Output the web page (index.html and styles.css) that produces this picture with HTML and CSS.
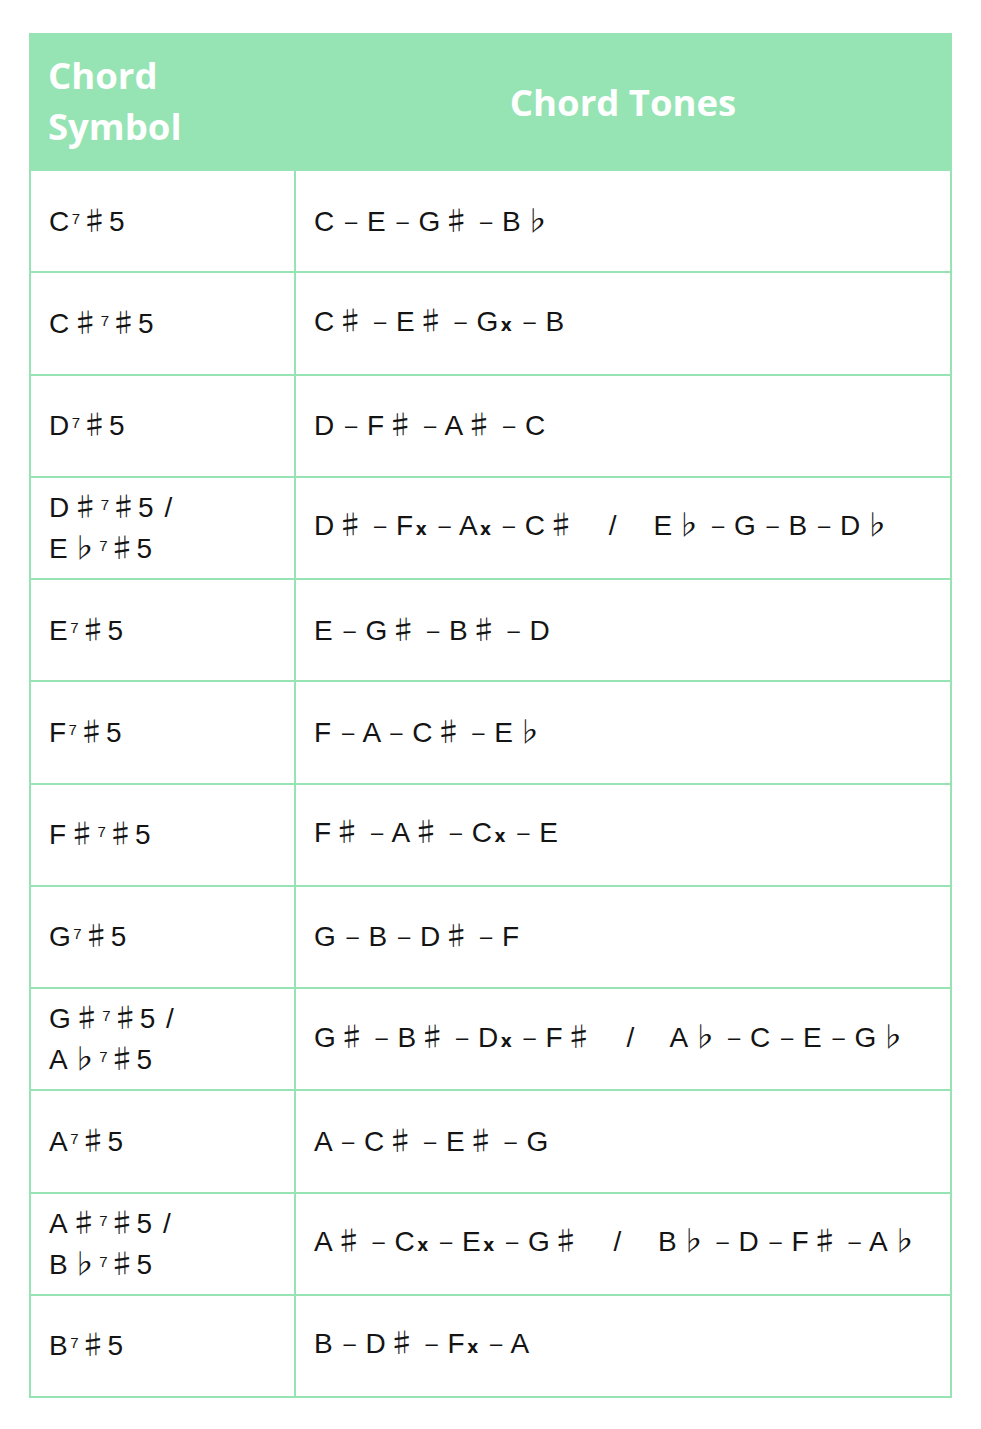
FILE: index.html
```html
<!DOCTYPE html>
<html>
<head>
<meta charset="utf-8">
<link rel="stylesheet" href="styles.css">
</head>
<body>
<div class="wrap">
<table class="chords">
  <thead>
    <tr><th class="c1">Chord<br>Symbol</th><th class="c2">Chord Tones</th></tr>
  </thead>
  <tbody>
    <tr><td>C<sup>7</sup><i>♯</i>5</td><td>C <s>–</s> E <s>–</s> G<i>♯</i> <s>–</s> B<i>♭</i></td></tr>
    <tr><td>C<i>♯</i><sup>7</sup><i>♯</i>5</td><td>C<i>♯</i> <s>–</s> E<i>♯</i> <s>–</s> G<b>x</b> <s>–</s> B</td></tr>
    <tr><td>D<sup>7</sup><i>♯</i>5</td><td>D <s>–</s> F<i>♯</i> <s>–</s> A<i>♯</i> <s>–</s> C</td></tr>
    <tr><td>D<i>♯</i><sup>7</sup><i>♯</i>5 /<br>E<i>♭</i><sup>7</sup><i>♯</i>5</td><td>D<i>♯</i> <s>–</s> F<b>x</b> <s>–</s> A<b>x</b> <s>–</s> C<i>♯</i> <span class="sl">/</span> E<i>♭</i> <s>–</s> G <s>–</s> B <s>–</s> D<i>♭</i></td></tr>
    <tr><td>E<sup>7</sup><i>♯</i>5</td><td>E <s>–</s> G<i>♯</i> <s>–</s> B<i>♯</i> <s>–</s> D</td></tr>
    <tr><td>F<sup>7</sup><i>♯</i>5</td><td>F <s>–</s> A <s>–</s> C<i>♯</i> <s>–</s> E<i>♭</i></td></tr>
    <tr><td>F<i>♯</i><sup>7</sup><i>♯</i>5</td><td>F<i>♯</i> <s>–</s> A<i>♯</i> <s>–</s> C<b>x</b> <s>–</s> E</td></tr>
    <tr><td>G<sup>7</sup><i>♯</i>5</td><td>G <s>–</s> B <s>–</s> D<i>♯</i> <s>–</s> F</td></tr>
    <tr><td>G<i>♯</i><sup>7</sup><i>♯</i>5 /<br>A<i>♭</i><sup>7</sup><i>♯</i>5</td><td>G<i>♯</i> <s>–</s> B<i>♯</i> <s>–</s> D<b>x</b> <s>–</s> F<i>♯</i> <span class="sl">/</span> A<i>♭</i> <s>–</s> C <s>–</s> E <s>–</s> G<i>♭</i></td></tr>
    <tr><td>A<sup>7</sup><i>♯</i>5</td><td>A <s>–</s> C<i>♯</i> <s>–</s> E<i>♯</i> <s>–</s> G</td></tr>
    <tr><td>A<i>♯</i><sup>7</sup><i>♯</i>5 /<br>B<i>♭</i><sup>7</sup><i>♯</i>5</td><td>A<i>♯</i> <s>–</s> C<b>x</b> <s>–</s> E<b>x</b> <s>–</s> G<i>♯</i> <span class="sl">/</span> B<i>♭</i> <s>–</s> D <s>–</s> F<i>♯</i> <s>–</s> A<i>♭</i></td></tr>
    <tr><td>B<sup>7</sup><i>♯</i>5</td><td>B <s>–</s> D<i>♯</i> <s>–</s> F<b>x</b> <s>–</s> A</td></tr>
  </tbody>
</table>
</div>
</body>
</html>
```

FILE: styles.css
```css
html, body {
  margin: 0;
  background: #ffffff;
}
.wrap {
  padding: 33px 29px 0 29px;
}
.chords {
  width: 923px;
  border-collapse: separate;
  border-spacing: 0;
  border-left: 2px solid #97e3b4;
  border-top: 2px solid #97e3b4;
  font-family: "Liberation Sans", Arial, sans-serif;
  color: #141414;
}
.chords th {
  background: #96e4b4;
  color: #ffffff;
  font-family: "Open Sans", sans-serif;
  font-weight: 700;
  font-size: 36.5px;
  line-height: 51px;
  height: 136px;
  padding: 0;
  box-sizing: border-box;
  border-right: 2px solid #96e4b4;
  vertical-align: middle;
}
.chords th.c1 {
  width: 265px;
  text-align: left;
  padding-left: 17px;
  padding-bottom: 2px;
}
.chords th.c2 {
  text-align: center;
}
.chords td {
  height: 100.25px;
  padding: 0 0 0 18px;
  border-right: 2px solid #97e3b4;
  border-bottom: 2px solid #97e3b4;
  font-size: 28px;
  line-height: 41px;
  letter-spacing: 1.5px;
  vertical-align: middle;
  white-space: nowrap;
}
.chords thead th { border-bottom: 2px solid #97e3b4; }
.chords i {
  font-style: normal;
  font-family: "Noto Sans CJK JP", "DejaVu Sans", sans-serif;
  font-size: 27px;
  line-height: 1;
  letter-spacing: 0;
  margin: 0 1px;
  color: #141414;
}
.chords s {
  text-decoration: none;
  font-size: 22px;
  vertical-align: 2px;
  line-height: 1;
  letter-spacing: 0.5px;
}
.chords sup {
  font-size: 15px;
  vertical-align: 7px;
  line-height: 0;
  letter-spacing: 0;
  margin-left: 1px;
}
.chords b {
  font-family: "DejaVu Sans", sans-serif;
  font-weight: 900;
  font-size: 17px;
  margin: 0 1px;
}
.chords .sl {
  margin: 0 26px 0 24px;
}
```
